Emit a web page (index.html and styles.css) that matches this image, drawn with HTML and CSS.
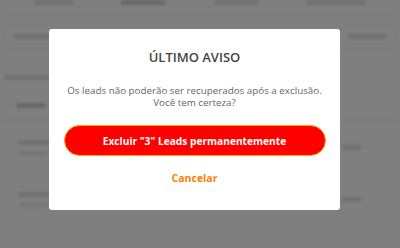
FILE: index.html
```html
<!DOCTYPE html>
<html>
<head>
    <title>Leads</title>
    <link rel="stylesheet" href="styles.css">
</head>
<body>
    <div class="page">
        <div class="tabs">
            <span class="bar w40"></span>
            <span class="bar w45 dark"></span>
            <span class="bar w45"></span>
            <span class="bar w60"></span>
        </div>
        <div class="toolbar">
            <span class="bar w60"></span>
            <span class="bar w40 right"></span>
        </div>
        <div class="section-title"><span class="bar w50"></span></div>
        <div class="table-head"><span class="bar w30 dark"></span></div>
        <div class="row">
            <div class="cell">
                <span class="bar w35"></span>
                <span class="bar w30 thin"></span>
            </div>
            <span class="bar w20 right"></span>
        </div>
        <div class="row">
            <div class="cell">
                <span class="bar w35"></span>
                <span class="bar w30 thin"></span>
            </div>
            <span class="bar w20 right"></span>
        </div>
        <div class="row">
            <div class="cell">
                <span class="bar w45"></span>
            </div>
        </div>
    </div>

    <div class="overlay">
        <div class="modal">
            <h2 class="modal-title">ÚLTIMO AVISO</h2>
            <p class="modal-text">Os leads não poderão ser recuperados após a exclusão.<br>Você tem certeza?</p>
            <button class="btn-danger">Excluir "3" Leads permanentemente</button>
            <button class="btn-cancel">Cancelar</button>
        </div>
    </div>
</body>
</html>
```

FILE: styles.css
```css
body {
    margin: 0;
    font-family: "Open Sans", Arial, sans-serif;
    background: #fff;
    overflow: hidden;
}

.page {
    filter: blur(1.6px);
    width: 400px;
    height: 248px;
    overflow: hidden;
}

.tabs {
    display: flex;
    justify-content: space-around;
    align-items: flex-start;
    height: 16px;
    padding: 0 10px;
    border-bottom: 1px solid #f0f0f0;
}

.toolbar {
    display: flex;
    align-items: center;
    height: 24px;
    margin: 6px 4px 0;
    padding: 0 8px;
    border: 1px solid #f0f0f0;
}

.bar {
    display: block;
    height: 5px;
    border-radius: 2px;
    background: #e2e2e2;
}

.bar.dark {
    background: #cfcfcf;
}

.bar.thin {
    height: 4px;
    margin-top: 6px;
    background: #e8e8e8;
}

.right {
    margin-left: auto;
}

.w20 { width: 20px; }
.w30 { width: 30px; }
.w35 { width: 35px; }
.w40 { width: 40px; }
.w45 { width: 45px; }
.w50 { width: 50px; }
.w60 { width: 60px; }

.section-title {
    padding: 26px 4px 10px;
    border-bottom: 1px solid #f0f0f0;
}

.table-head {
    padding: 12px 16px;
    border-bottom: 1px solid #f0f0f0;
}

.row {
    display: flex;
    align-items: center;
    height: 52px;
    padding: 0 38px 0 18px;
}

.overlay {
    position: fixed;
    inset: 0;
    background: rgba(0, 0, 0, 0.5);
    display: flex;
    justify-content: center;
    align-items: flex-start;
    padding-top: 29px;
    padding-right: 11px;
}

.modal {
    width: 291px;
    height: 181px;
    box-sizing: border-box;
    background: #fff;
    border-radius: 3px;
    display: flex;
    flex-direction: column;
    align-items: center;
    padding-top: 19px;
}

.modal-title {
    margin: 0;
    font-size: 13px;
    font-weight: 600;
    color: #444;
}

.modal-text {
    margin: 19px 0 0;
    font-size: 9.8px;
    line-height: 12px;
    color: #666;
    text-align: center;
}

.btn-danger {
    margin-top: 16px;
    width: 262px;
    height: 31px;
    border: 1px solid #ffa500;
    border-radius: 16px;
    background: #ff0000;
    color: #fff;
    font-family: inherit;
    font-size: 10.2px;
    font-weight: 700;
}

.btn-cancel {
    margin-top: 14px;
    border: 0;
    background: none;
    color: #ff8000;
    font-family: inherit;
    font-size: 10.5px;
    font-weight: 700;
}
```
